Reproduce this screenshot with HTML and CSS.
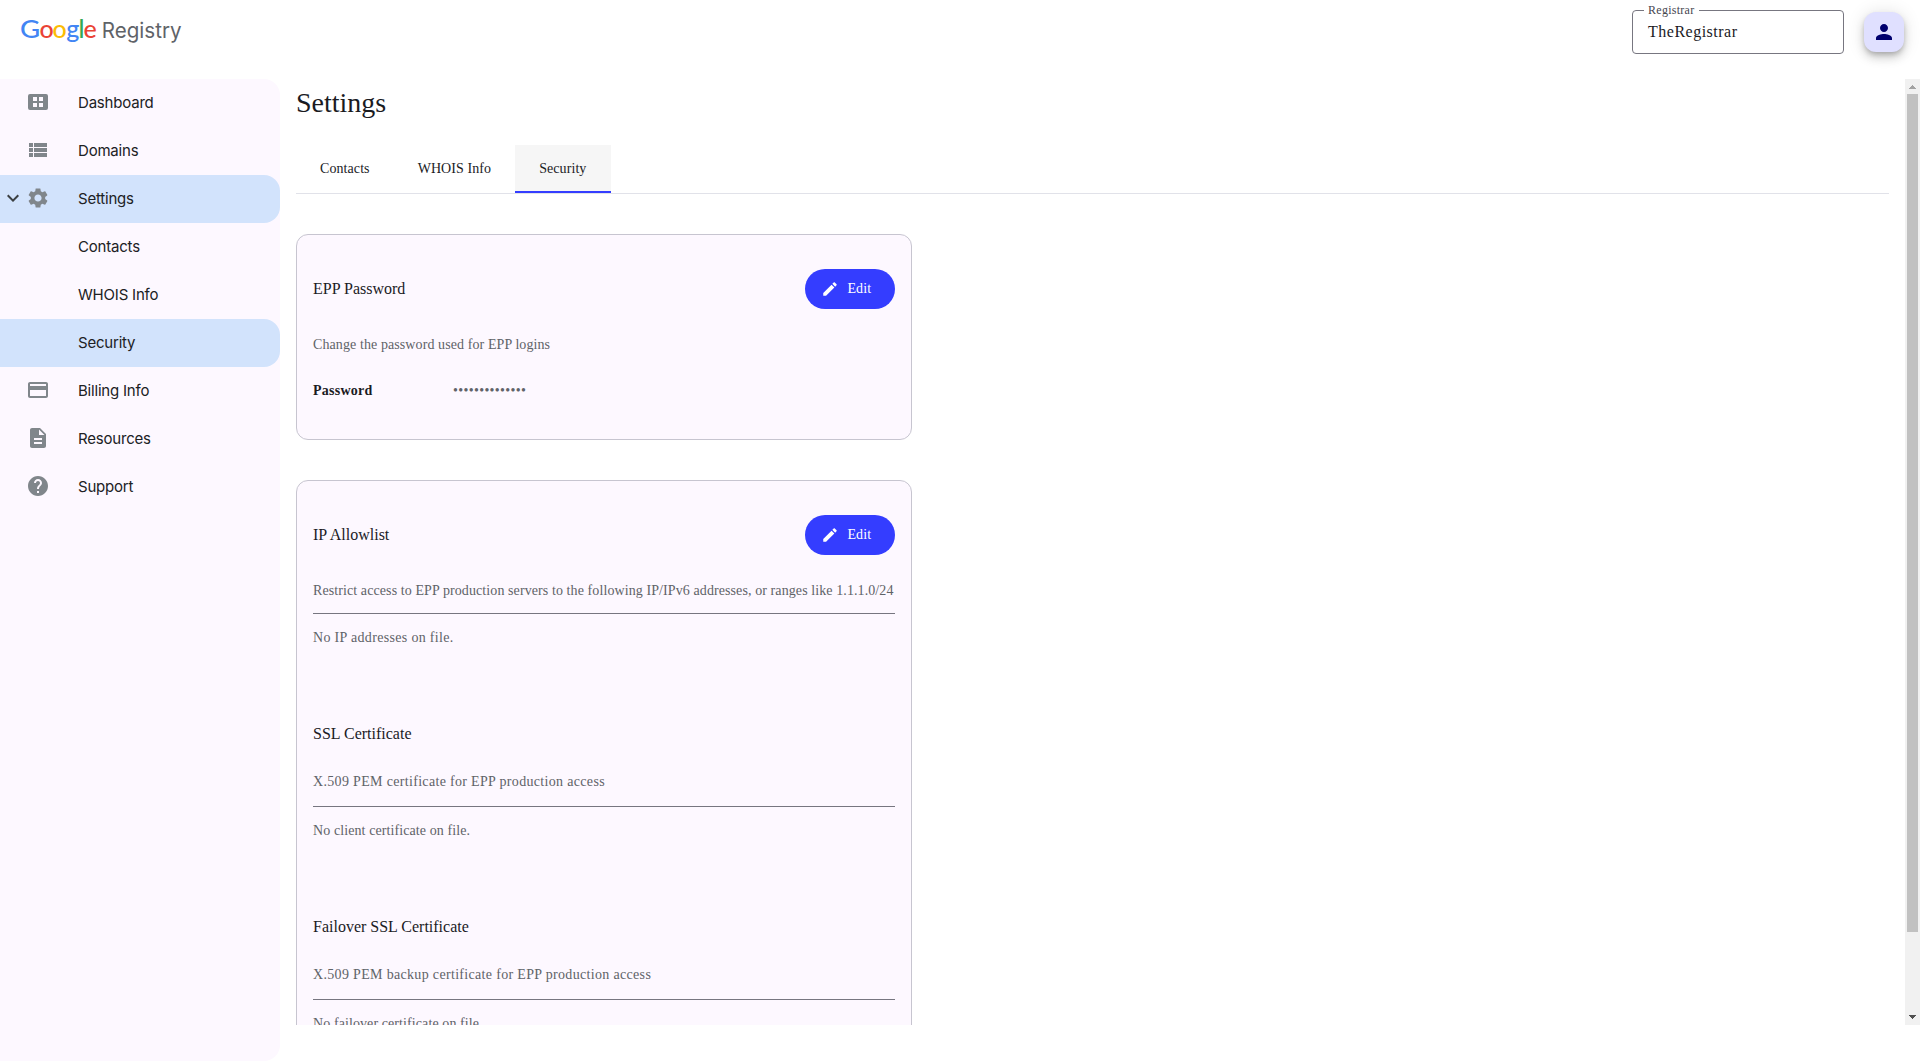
FILE: index.html
```html
<!DOCTYPE html>
<html lang="en">
<head>
<meta charset="utf-8">
<title>Google Registry</title>
<link rel="stylesheet" href="styles.css">
</head>
<body>
<header class="topbar">
  <svg class="logo" width="170" height="34" viewBox="0 0 170 34" role="img" aria-label="Google Registry">
    <g class="logo-google">
      <text x="0" y="25.2" textLength="20.2" lengthAdjust="spacingAndGlyphs" fill="#4285f4">G</text>
      <text x="19.4" y="25.2" fill="#ea4335">o</text>
      <text x="32.6" y="25.2" fill="#fbbc04">o</text>
      <text x="46.2" y="25.2" fill="#4285f4">g</text>
      <text x="58.6" y="25.2" fill="#34a853">l</text>
      <text x="63.4" y="25.2" fill="#ea4335">e</text>
    </g>
    <text class="logo-registry" x="81.8" y="25.2" textLength="79.8" lengthAdjust="spacingAndGlyphs">Registry</text>
  </svg>
  <div class="registrar">
    <span class="registrar-label">Registrar</span>
    <span class="registrar-value">TheRegistrar</span>
  </div>
  <button class="user" aria-label="User">
    <svg width="24" height="24" viewBox="0 0 24 24"><path d="M12 12c2.21 0 4-1.79 4-4s-1.79-4-4-4-4 1.79-4 4 1.79 4 4 4zm0 2c-2.67 0-8 1.34-8 4v2h16v-2c0-2.66-5.33-4-8-4z"/></svg>
  </button>
</header>
<div class="shell">
  <nav class="sidenav">
    <a class="item"><span class="caret"></span><svg class="icon" viewBox="0 0 24 24"><path fill-rule="evenodd" d="M4 4h16a2 2 0 0 1 2 2v12a2 2 0 0 1-2 2H4a2 2 0 0 1-2-2V6a2 2 0 0 1 2-2zM7 7v4h4V7zM13 7v4h4V7zM7 13v4h4v-4zM13 13v4h4v-4z"/></svg>Dashboard</a>
    <a class="item"><span class="caret"></span><svg class="icon" viewBox="0 0 24 24"><path d="M3 14h4v-4H3v4zm0 5h4v-4H3v4zM3 9h4V5H3v4zm5 5h13v-4H8v4zm0 5h13v-4H8v4zM8 5v4h13V5H8z"/></svg>Domains</a>
    <a class="item active"><span class="caret"><svg width="24" height="24" viewBox="0 0 24 24"><path d="M16.59 8.59 12 13.17 7.41 8.59 6 10l6 6 6-6z"/></svg></span><svg class="icon" viewBox="0 0 24 24"><path d="M19.14 12.94c.04-.3.06-.61.06-.94 0-.32-.02-.64-.07-.94l2.03-1.58c.18-.14.23-.41.12-.61l-1.92-3.32c-.12-.22-.37-.29-.59-.22l-2.39.96c-.5-.38-1.03-.7-1.62-.94l-.36-2.54c-.04-.24-.24-.41-.48-.41h-3.84c-.24 0-.43.17-.47.41l-.36 2.54c-.59.24-1.13.57-1.62.94l-2.39-.96c-.22-.08-.47 0-.59.22L2.74 8.87c-.12.21-.08.47.12.61l2.03 1.58c-.05.3-.09.63-.09.94s.02.64.07.94l-2.03 1.58c-.18.14-.23.41-.12.61l1.92 3.32c.12.22.37.29.59.22l2.39-.96c.5.38 1.03.7 1.62.94l.36 2.54c.05.24.24.41.48.41h3.84c.24 0 .44-.17.47-.41l.36-2.54c.59-.24 1.13-.56 1.62-.94l2.39.96c.22.08.47 0 .59-.22l1.92-3.32c.12-.22.07-.47-.12-.61l-2.01-1.58zM12 15.6c-1.98 0-3.6-1.62-3.6-3.6s1.62-3.6 3.6-3.6 3.6 1.62 3.6 3.6-1.62 3.6-3.6 3.6z"/></svg>Settings</a>
    <a class="item child">Contacts</a>
    <a class="item child">WHOIS Info</a>
    <a class="item child active">Security</a>
    <a class="item"><span class="caret"></span><svg class="icon" viewBox="0 0 24 24"><path d="M20 4H4c-1.11 0-1.99.89-1.99 2L2 18c0 1.11.89 2 2 2h16c1.11 0 2-.89 2-2V6c0-1.11-.89-2-2-2zm0 14H4v-6h16v6zm0-10H4V6h16v2z"/></svg>Billing Info</a>
    <a class="item"><span class="caret"></span><svg class="icon" viewBox="0 0 24 24"><path d="M14 2H6c-1.1 0-1.99.9-1.99 2L4 20c0 1.1.89 2 1.99 2H18c1.1 0 2-.9 2-2V8l-6-6zm2 16H8v-2h8v2zm0-4H8v-2h8v2zm-3-5V3.5L18.5 9H13z"/></svg>Resources</a>
    <a class="item"><span class="caret"></span><svg class="icon" viewBox="0 0 24 24"><path d="M12 2C6.48 2 2 6.48 2 12s4.48 10 10 10 10-4.48 10-10S17.52 2 12 2zm1 17h-2v-2h2v2zm2.07-7.75-.9.92C13.45 12.9 13 13.5 13 15h-2v-.5c0-1.1.45-2.1 1.17-2.83l1.24-1.26c.37-.36.59-.86.59-1.41 0-1.1-.9-2-2-2s-2 .9-2 2H8c0-2.21 1.79-4 4-4s4 1.79 4 4c0 .88-.36 1.68-.93 2.25z"/></svg>Support</a>
  </nav>
  <main class="content">
    <h1 class="page-title">Settings</h1>
    <div class="tabs">
      <a class="tab">Contacts</a>
      <a class="tab">WHOIS Info</a>
      <a class="tab selected">Security</a>
    </div>
    <section class="card">
      <div class="card-head">
        <h2 class="card-title">EPP Password</h2>
        <button class="edit"><svg width="18" height="18" viewBox="0 0 24 24"><path d="M3 17.25V21h3.75L17.81 9.94l-3.75-3.75L3 17.25zM20.71 7.04c.39-.39.39-1.02 0-1.41l-2.34-2.34c-.39-.39-1.02-.39-1.41 0l-1.83 1.83 3.75 3.75 1.83-1.83z"/></svg>Edit</button>
      </div>
      <p class="text intro">Change the password used for EPP logins</p>
      <div class="field">
        <b class="field-name">Password</b>
        <span class="field-value">••••••••••••••</span>
      </div>
    </section>
    <section class="card">
      <div class="card-head">
        <h2 class="card-title">IP Allowlist</h2>
        <button class="edit"><svg width="18" height="18" viewBox="0 0 24 24"><path d="M3 17.25V21h3.75L17.81 9.94l-3.75-3.75L3 17.25zM20.71 7.04c.39-.39.39-1.02 0-1.41l-2.34-2.34c-.39-.39-1.02-.39-1.41 0l-1.83 1.83 3.75 3.75 1.83-1.83z"/></svg>Edit</button>
      </div>
      <p class="text intro">Restrict access to EPP production servers to the following IP/IPv6 addresses, or ranges like 1.1.1.0/24</p>
      <p class="text entry first wide">No IP addresses on file.</p>
      <h2 class="card-title section-title">SSL Certificate</h2>
      <p class="text hint wide">X.509 PEM certificate for EPP production access</p>
      <p class="text entry">No client certificate on file.</p>
      <h2 class="card-title section-title">Failover SSL Certificate</h2>
      <p class="text hint wide">X.509 PEM backup certificate for EPP production access</p>
      <p class="text entry">No failover certificate on file.</p>
    </section>
  </main>
  <div class="scrollbar">
    <svg width="15" height="15" viewBox="0 0 15 15" shape-rendering="crispEdges"><path fill="#a3a3a3" d="M7 6h1v1h1v1h1v1h1v1H4V9h1V8h1V7h1z"/></svg>
    <div class="thumb"></div>
    <svg class="down" width="15" height="15" viewBox="0 0 15 15" shape-rendering="crispEdges"><path fill="#505050" d="M4 5h7v1h-1v1H9v1H8v1H7V8H6V7H5V6H4z"/></svg>
  </div>
</div>
</body>
</html>
```
FILE: styles.css
```css
* { box-sizing: border-box; }

body {
  margin: 0;
  height: 1061px;
  overflow: hidden;
  display: flex;
  flex-direction: column;
  background: #fff;
  color: #1b1b1f;
  font-family: "Liberation Serif", "Times New Roman", serif;
}

h1, h2, p { margin: 0; font-weight: 400; }
button { border: 0; font: inherit; }

.topbar {
  height: 79px;
  flex: none;
  display: flex;
  align-items: flex-start;
  padding: 10px 16px 0 20px;
}
.logo { margin-top: 3px; margin-right: auto; overflow: visible; }
.logo-google { font: 500 25px Lato, sans-serif; }
.logo-registry { font: 400 21px Inter, sans-serif; fill: #5f6368; }

.registrar {
  position: relative;
  width: 212px;
  height: 44px;
  border: 1px solid #777680;
  border-radius: 4px;
  padding: 9px 15px;
}
.registrar-label {
  position: absolute;
  left: 11px;
  top: -9px;
  padding: 0 4px;
  background: #fff;
  color: #46464f;
  font-size: 12px;
  line-height: 16px;
  letter-spacing: 0.28px;
}
.registrar-value {
  font-size: 16px;
  line-height: 24px;
  letter-spacing: 0.5px;
}
.user {
  margin: 2px 0 0 20px;
  width: 40px;
  height: 40px;
  padding: 8px;
  border-radius: 12px;
  background: #e0e0ff;
  fill: #00006e;
  box-shadow: 0 3px 5px -1px rgba(0,0,0,.2), 0 6px 10px rgba(0,0,0,.14), 0 1px 18px rgba(0,0,0,.12);
}
.user svg { display: block; }

.shell { flex: 1; display: flex; align-items: flex-start; min-height: 0; }

.sidenav {
  width: 280px;
  height: 100%;
  background: #fdf8ff;
  border-radius: 0 16px 16px 0;
  font: 400 15px Inter, sans-serif;
  letter-spacing: -0.2px;
  color: #202124;
}
.item {
  height: 48px;
  display: flex;
  align-items: center;
  border-radius: 0 16px 16px 0;
  padding-bottom: 2px;
}
.item.active { background: #d2e3fc; }
.item.child { padding-left: 78px; }
.caret { width: 26px; padding-left: 1px; height: 24px; fill: #3c4043; }
.caret svg { display: block; }
.icon { width: 24px; height: 24px; margin-right: 28px; fill: #80868b; }

.content {
  flex: 1;
  height: 946px;
  overflow: hidden;
  padding: 0 16px;
}
.page-title { margin-top: 6px; font-size: 28px; line-height: 36px; }
.tabs {
  display: flex;
  height: 49px;
  margin: 24px 0 40px;
  border-bottom: 1px solid #e1e2e9;
}
.tab {
  height: 48px;
  padding: 0 24px;
  font-size: 14px;
  line-height: 48px;
  letter-spacing: 0.08px;
}
.tab.selected { padding-right: 24.6px; background: #f6f6f6; border-bottom: 2px solid #343dff; }

.card {
  width: 616px;
  margin-bottom: 40px;
  padding: 34px 16px 38px;
  border: 1px solid #c7c5d0;
  border-radius: 12px;
  background: #fdf8ff;
}
.card-head { display: flex; justify-content: space-between; align-items: center; }
.card-title { font-size: 16px; line-height: 24px; }
.edit {
  display: flex;
  align-items: center;
  gap: 8px;
  width: 89.6px;
  height: 40px;
  padding: 0 16px;
  border-radius: 20px;
  background: #343dff;
  color: #fff;
  fill: #fff;
  font-size: 14px;
  letter-spacing: 0.1px;
}
.text { font-size: 14px; line-height: 20px; letter-spacing: 0.092px; color: #5f6368; white-space: nowrap; }
.wide { letter-spacing: 0.325px; }
.intro { margin-top: 26px; }
.field { display: flex; margin-top: 26px; font-size: 14px; line-height: 20px; letter-spacing: 0.25px; }
.field-name { width: 140px; }
.field-value { color: #5f6368; letter-spacing: 0.33px; }
.entry { margin-top: 14px; padding-top: 14px; border-top: 1px solid #777680; }
.entry.first { margin-top: 12px; }
.section-title { margin-top: 74px; }
.hint { margin-top: 26px; }

.scrollbar {
  width: 15px;
  height: 946px;
  display: flex;
  flex-direction: column;
  align-items: center;
  background: #f1f1f1;
}
.thumb { width: 11px; height: 838px; background: #c1c1c1; }
.down { margin-top: auto; }
```
